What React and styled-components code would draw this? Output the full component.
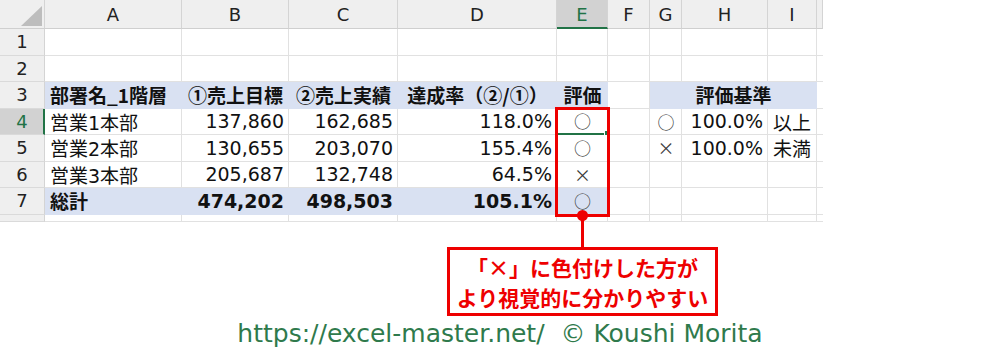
import React from "react"
import styled, { createGlobalStyle } from "styled-components"

const green = '#217346';
const red = '#ee0000';
const blueFill = '#d9e1f2';
const gridLine = '#e1e1e1';

const letters = ['A', 'B', 'C', 'D', 'E', 'F', 'G', 'H', 'I', ''];

// each row: [A, B, C, D, E, F, G, H, I]
const rows = [
  { n: 1, cells: [] },
  { n: 2, cells: [] },
  { n: 3, header: true },
  { n: 4, cells: ['営業1本部', '137,860', '162,685', '118.0%', '○', '', '○', '100.0%', '以上'] },
  { n: 5, cells: ['営業2本部', '130,655', '203,070', '155.4%', '○', '', '×', '100.0%', '未満'] },
  { n: 6, cells: ['営業3本部', '205,687', '132,748', '64.5%', '×'] },
  { n: 7, total: true, cells: ['総計', '474,202', '498,503', '105.1%', '○'] },
];

const align = ['left', 'right', 'right', 'right', 'center', 'left', 'center', 'right', 'left', 'left'];

class App extends React.Component {

  renderRow(row) {
    if (row.header) {
      return (
        <React.Fragment key={row.n}>
          <RowHead>{row.n}</RowHead>
          <Cell $fill $bold $align="left" $cjk>部署名_1階層</Cell>
          <Cell $fill $bold $align="center" $cjk>①売上目標</Cell>
          <Cell $fill $bold $align="center" $cjk>②売上実績</Cell>
          <Cell $fill $bold $align="center" $cjk>達成率（②/①）</Cell>
          <Cell $fill $bold $align="center" $cjk>評価</Cell>
          <Cell />
          <Cell $fill $bold $align="center" $cjk $span={3}>評価基準</Cell>
          <Cell />
        </React.Fragment>
      );
    }
    const cells = [];
    for (let i = 0; i < 10; i++) {
      const value = row.cells[i] || '';
      const isMark = value === '○' || value === '×';
      cells.push(
        <Cell
          key={i}
          $align={align[i]}
          $fill={row.total && i < 5}
          $bold={row.total && !isMark}
          $selected={row.n === 4 && i === 4}
        >
          {isMark ? <Mark>{value}</Mark> : value}
        </Cell>
      );
    }
    return (
      <React.Fragment key={row.n}>
        <RowHead $active={row.n === 4}>{row.n}</RowHead>
        {cells}
      </React.Fragment>
    );
  }

  render() {
    return (
      <Page>
        <GlobalStyle />
        <SheetWrap>
          <Sheet>
            <Corner>
              <svg width="21" height="20" viewBox="0 0 21 20">
                <polygon points="21,0 21,20 0,20" fill="#bdbdbd" />
              </svg>
            </Corner>
            {letters.map((l, i) => (
              <ColHead key={i} $active={l === 'E'}>{l}</ColHead>
            ))}
            {rows.map(r => this.renderRow(r))}
            <RowHead />
            {letters.map((l, i) => <Cell key={'r8' + i} />)}
          </Sheet>
          <Highlight />
          <Stem />
          <Dot />
        </SheetWrap>
        <Callout>
          <span>「×」に色付けした方が</span>
          <span>より視覚的に分かりやすい</span>
        </Callout>
        <Footer>https://excel-master.net/&nbsp;&nbsp;© Koushi Morita</Footer>
      </Page>
    )
  }
};

const GlobalStyle = createGlobalStyle`
  body {
    margin: 0;
    background: #ffffff;
  }
`;

const Page = styled.div`
  width: 1000px;
  height: 351px;
  display: flex;
  flex-direction: column;
  overflow: hidden;
  font-family: "DejaVu Sans", "Noto Sans CJK JP", sans-serif;
`;

const SheetWrap = styled.div`
  position: relative;
  width: 823px;
  height: 222px;
  overflow: visible;
`;

const Sheet = styled.div`
  display: grid;
  grid-template-columns: 45px 137px 107px 109px 159px 51px 42px 32px 86px 49px 6px;
  grid-template-rows: 29px repeat(7, 26.5px) 7px;
  height: 222px;
  overflow: hidden;
  color: #111;
`;

const Corner = styled.div`
  box-sizing: border-box;
  background: #efefef;
  border-right: 1px solid #d4d4d4;
  border-bottom: 1px solid #cfcfcf;
  display: flex;
  align-items: flex-end;
  justify-content: flex-end;
  padding: 0 2px 2px 0;
`;

const ColHead = styled.div`
  box-sizing: border-box;
  background: ${p => p.$active ? '#d2d2d2' : '#efefef'};
  color: ${p => p.$active ? green : '#222'};
  border-right: 1px solid #d4d4d4;
  border-bottom: ${p => p.$active ? `2px solid ${green}` : '1px solid #cfcfcf'};
  font-family: "DejaVu Sans", sans-serif;
  font-size: 18px;
  display: flex;
  align-items: center;
  justify-content: center;
  padding-top: 1px;
`;

const RowHead = styled.div`
  box-sizing: border-box;
  background: ${p => p.$active ? '#d2d2d2' : '#efefef'};
  color: ${p => p.$active ? green : '#222'};
  border-right: ${p => p.$active ? `2px solid ${green}` : '1px solid #d4d4d4'};
  border-bottom: 1px solid #dadada;
  font-family: "DejaVu Sans", sans-serif;
  font-size: 18px;
  display: flex;
  align-items: center;
  justify-content: center;
  padding-left: ${p => p.$active ? '1px' : '0'};
`;

const Cell = styled.div`
  position: relative;
  box-sizing: border-box;
  grid-column: ${p => p.$span ? `span ${p.$span}` : 'auto'};
  background: ${p => p.$fill ? blueFill : '#ffffff'};
  border-right: 1px solid ${p => p.$fill ? blueFill : gridLine};
  border-bottom: ${p => p.$selected ? `2px solid ${green}` : `1px solid ${p.$fill ? blueFill : gridLine}`};
  font-family: ${p => p.$cjk ? '"Noto Sans CJK JP", sans-serif' : '"DejaVu Sans", "Noto Sans CJK JP", sans-serif'};
  font-size: 19px;
  font-weight: ${p => p.$bold ? 700 : 400};
  display: flex;
  align-items: center;
  justify-content: ${p => p.$align === 'right' ? 'flex-end' : p.$align === 'center' ? 'center' : 'flex-start'};
  padding: 0 4px 0 5px;
  white-space: nowrap;
  overflow: visible;
  &::after {
    content: '';
    display: ${p => p.$selected ? 'block' : 'none'};
    position: absolute;
    right: -4px;
    bottom: -4px;
    width: 5px;
    height: 5px;
    background: ${green};
    border: 1px solid #ffffff;
  }
`;

const Mark = styled.span`
  font-family: "Noto Sans CJK JP", sans-serif;
  font-weight: 400;
  font-size: 17px;
  color: #3a3a3a;
`;

const Highlight = styled.div`
  position: absolute;
  left: 555px;
  top: 107px;
  width: 55px;
  height: 110px;
  box-sizing: border-box;
  border: 3px solid ${red};
  pointer-events: none;
`;

const Stem = styled.div`
  position: absolute;
  left: 581px;
  top: 215px;
  width: 3px;
  height: 33px;
  background: ${red};
`;

const Dot = styled.div`
  position: absolute;
  left: 577px;
  top: 210px;
  width: 11px;
  height: 11px;
  border-radius: 50%;
  background: ${red};
`;

const Callout = styled.div`
  box-sizing: border-box;
  margin: 25px 0 0 447px;
  width: 271px;
  height: 69px;
  border: 3px solid ${red};
  display: flex;
  flex-direction: column;
  align-items: center;
  justify-content: center;
  color: ${red};
  font-family: "Noto Sans CJK JP", sans-serif;
  font-weight: 700;
  font-size: 21px;
  line-height: 30px;
`;

const Footer = styled.div`
  margin-top: 3px;
  text-align: center;
  color: #2f7a4c;
  font-family: "DejaVu Sans", sans-serif;
  font-size: 25px;
  line-height: 29px;
`;

export default App;
